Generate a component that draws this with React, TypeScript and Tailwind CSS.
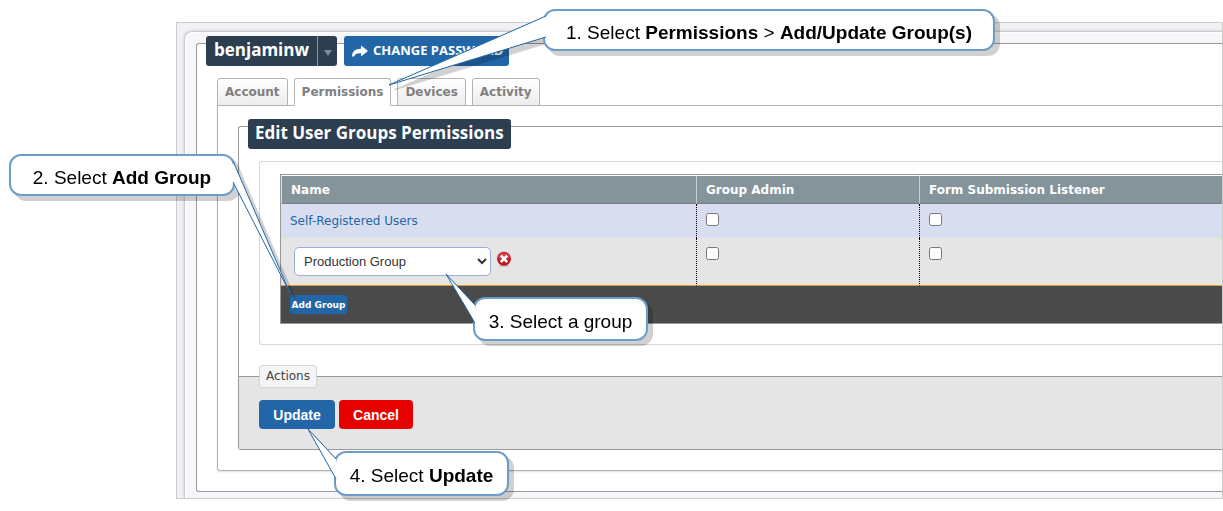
import type { ReactNode } from "react";

type CalloutProps = {
  className: string;
  tail: ReactNode;
  children: ReactNode;
};

const Callout = ({ className, tail, children }: CalloutProps) => {
  return (
    <div
      className={`absolute flex items-center justify-center rounded-xl border-2 border-[#6c9dc8] bg-white pt-[6px] whitespace-nowrap font-['Liberation_Sans',Arial,sans-serif] text-[19px] text-black drop-shadow-[5px_5px_0_rgba(0,0,0,0.18)] ${className}`}
    >
      {tail}
      <p className="relative">{children}</p>
    </div>
  );
};

type TabProps = {
  label: string;
  active?: boolean;
};

const Tab = ({ label, active }: TabProps) => {
  return (
    <a
      href={`#${label.toLowerCase()}`}
      className={`flex h-7 items-center rounded-t-[3px] border border-[#b3b3b3] px-[7px] text-xs font-bold text-[#808080] ${
        active ? "border-b-white bg-white" : "bg-linear-to-b from-white to-[#ececec]"
      }`}
    >
      {label}
    </a>
  );
};

const DeleteIcon = () => {
  return (
    <svg viewBox="0 0 16 16" className="size-4">
      <ellipse cx="8" cy="14.6" rx="5" ry="1.2" fill="#000" opacity="0.2" />
      <circle cx="8" cy="7.8" r="7" fill="#c3161c" />
      <path d="M2 7a6 5.6 0 0 1 12 0q-6 2-12 0" fill="#e2686b" opacity="0.5" />
      <path
        d="M5.7 5.5l4.600 4.600M10.300 5.500l-4.600 4.600"
        stroke="#fff"
        strokeWidth="2.6"
        strokeLinecap="square"
      />
    </svg>
  );
};

const GroupsTable = () => {
  return (
    <table className="w-full table-fixed border-separate border-spacing-0 border border-r-0 border-[#999] text-left text-xs">
      <colgroup>
        <col className="w-[415px]" />
        <col className="w-[223px]" />
        <col />
      </colgroup>
      <thead>
        <tr className="h-[29px] bg-[#84949a] text-white">
          <th className="border-t border-l border-t-white border-l-[#ddd] border-b border-b-[#777f82] pl-[9px]">
            Name
          </th>
          <th className="border-t border-l border-t-white border-l-[#ccc] border-b border-b-[#777f82] pl-[9px]">
            Group Admin
          </th>
          <th className="border-t border-l border-t-white border-l-[#ccc] border-b border-b-[#777f82] pl-[9px]">
            Form Submission Listener
          </th>
        </tr>
      </thead>
      <tbody>
        <tr className="h-[34px] bg-[#d8def0]">
          <td className="pl-[9px]">
            <a href="#self-registered" className="text-[#2366a8]">
              Self-Registered Users
            </a>
          </td>
          <td className="border-l border-dotted border-black pt-[9px] pl-[9px] align-top">
            <input
              type="checkbox"
              aria-label="Self-Registered Users group admin"
              className="block size-[13px]"
            />
          </td>
          <td className="border-l border-dotted border-black pt-[9px] pl-[9px] align-top">
            <input
              type="checkbox"
              aria-label="Self-Registered Users submission listener"
              className="block size-[13px]"
            />
          </td>
        </tr>
        <tr className="h-12 bg-[#e5e5e5]">
          <td className="border-b border-[#eb9a22] pl-[13px]">
            <div className="flex gap-[5px]">
              <select
                aria-label="Group"
                className="h-[29px] w-[197px] rounded-[5px] border border-[#9dacda] bg-white px-[5px] font-['Liberation_Sans',Arial,sans-serif] text-[13px] text-[#333]"
              >
                <option>Production Group</option>
              </select>
              <button type="button" aria-label="Remove group" className="self-start pt-1">
                <DeleteIcon />
              </button>
            </div>
          </td>
          <td className="border-b border-l border-b-[#eb9a22] border-l-black [border-left-style:dotted] pt-[9px] pl-[9px] align-top">
            <input
              type="checkbox"
              aria-label="New group admin"
              className="block size-[13px]"
            />
          </td>
          <td className="border-b border-l border-b-[#eb9a22] border-l-black [border-left-style:dotted] pt-[9px] pl-[9px] align-top">
            <input
              type="checkbox"
              aria-label="New group submission listener"
              className="block size-[13px]"
            />
          </td>
        </tr>
      </tbody>
      <tfoot>
        <tr className="h-[37px] bg-[#4a4a4a]">
          <td colSpan={3} className="pl-[9px]">
            <button
              type="button"
              className="block h-[19px] w-[57px] rounded-[3px] bg-[#2366a8] text-[9px] font-bold whitespace-nowrap text-white"
            >
              Add Group
            </button>
          </td>
        </tr>
      </tfoot>
    </table>
  );
};

const GroupsForm = () => {
  return (
    <section className="ml-5 mt-5 mb-5 rounded-l-[3px] border border-r-0 border-[#999]">
      <h2 className="-mt-2 ml-[9px] flex h-[30px] w-fit items-center rounded-[3px] bg-[#2c3e50] px-[7px] pb-[3px] font-['Open_Sans','Trebuchet_MS',sans-serif] text-[17px] font-bold whitespace-nowrap text-white">
        Edit User Groups Permissions
      </h2>
      <div className="mt-3 ml-5 rounded-l-[3px] border border-r-0 border-[#d5d5d5] pt-3 pb-5 pl-5">
        <GroupsTable />
      </div>
      <div className="mt-[31px] border-t border-[#999] bg-[#e5e5e5] pb-5 pl-5">
        <div className="-mt-3 flex h-[23px] w-[58px] items-center justify-center rounded-[3px] border border-[#d5d5d5] bg-[#f5f5f5] pb-px text-xs text-[#444]">
          Actions
        </div>
        <div className="mt-3 flex gap-1 font-['Liberation_Sans',Arial,sans-serif] text-sm font-bold text-white">
          <button type="submit" className="h-[29px] w-[76px] rounded-[4px] bg-[#2366a8]">
            Update
          </button>
          <button type="button" className="h-[29px] w-[74px] rounded-[4px] bg-[#e60000]">
            Cancel
          </button>
        </div>
      </div>
    </section>
  );
};

const UserPage = () => {
  return (
    <div className="overflow-hidden border border-[#ccc] bg-[#f0f0f5] pt-2 pl-[7px]">
      <div className="rounded-tl-lg border-t border-l border-[#ccc] bg-[#f6f6fa] pt-[11px] pb-[6px] pl-[11px] shadow-[inset_1px_1px_2px_#fff,0_0_3px_#ccc]">
        <div className="rounded-l-[3px] border border-r-0 border-[#999] bg-white pb-5">
          <div className="-mt-2 ml-[9px] flex gap-[7px] font-['Open_Sans','Trebuchet_MS',sans-serif] font-bold text-white">
            <div className="flex h-[30px] w-[131px] overflow-hidden rounded-[3px] bg-[#2c3e50]">
              <h1 className="w-[112px] border-r border-[#8a96a0] pl-2 text-[17px] leading-7">
                benjaminw
              </h1>
              <button type="button" aria-label="User menu" className="flex flex-1 items-center justify-center pt-1">
                <svg viewBox="0 0 8 6" className="h-[6px] w-2">
                  <path d="M0 0h8L4 6z" fill="#7f8c97" />
                </svg>
              </button>
            </div>
            <button
              type="button"
              className="flex h-[30px] w-[165px] items-center gap-[5px] rounded-[3px] bg-[#2366a8] pl-2 text-[13px] whitespace-nowrap"
            >
              <svg viewBox="0 0 16 12" className="h-3 w-4">
                <path d="M9 0.500L16 6L9 11.500V8.300C5 8 3.500 8.800 2 11.500H0C0 6.500 3 3.700 9 3.700z" fill="#fff" />
              </svg>
              CHANGE PASSWORD
            </button>
          </div>
          <nav className="mt-3 ml-5 flex gap-[6px]">
            <Tab label="Account" />
            <Tab label="Permissions" active />
            <Tab label="Devices" />
            <Tab label="Activity" />
          </nav>
          <div className="-mt-px ml-5 rounded-bl-[3px] border border-r-0 border-[#b3b3b3] shadow-[0_1px_2px_#ddd]">
            <GroupsForm />
          </div>
        </div>
      </div>
    </div>
  );
};

const App = () => {
  return (
    <main className="relative bg-white pt-[22px] pb-3 pl-[176px] font-['DejaVu_Sans',Verdana,sans-serif]">
      <UserPage />

      <Callout
        className="top-[9px] left-[543px] h-[42px] w-[452px]"
        tail={
          <svg viewBox="0 0 160 76" className="absolute -left-[158px] top-1 h-[76px] w-40">
            <path d="M159 1L2 70L159 22z" fill="#fff" />
            <path d="M159 1L2 70L159 22" fill="none" stroke="#1f66a5" />
          </svg>
        }
      >
        1. Select <strong>Permissions</strong> &gt; <strong>Add/Update Group(s)</strong>
      </Callout>

      <Callout
        className="top-[154px] left-[9px] h-[42px] w-[226px]"
        tail={
          <svg viewBox="0 0 60 136" className="absolute -right-[59px] top-1 h-[136px] w-[60px]">
            <path d="M1 1L58 133L1 22z" fill="#fff" />
            <path d="M1 1L58 133L1 22" fill="none" stroke="#1f66a5" />
          </svg>
        }
      >
        2. Select <strong>Add Group</strong>
      </Callout>

      <Callout
        className="top-[297px] left-[473px] h-11 w-[175px]"
        tail={
          <svg viewBox="0 0 32 54" className="absolute -left-[31px] -top-[27px] h-[54px] w-8">
            <path d="M31 33L2 2L31 51z" fill="#fff" />
            <path d="M31 33L2 2L31 51" fill="none" stroke="#1f66a5" />
          </svg>
        }
      >
        3. Select a group
      </Callout>

      <Callout
        className="top-[451px] left-[334px] h-[45px] w-[175px]"
        tail={
          <svg viewBox="0 0 32 54" className="absolute -left-[31px] -top-[25px] h-[54px] w-8">
            <path d="M31 31L3 1L31 51z" fill="#fff" />
            <path d="M31 31L3 1L31 51" fill="none" stroke="#1f66a5" />
          </svg>
        }
      >
        4. Select <strong>Update</strong>
      </Callout>
    </main>
  );
};

export default App;
